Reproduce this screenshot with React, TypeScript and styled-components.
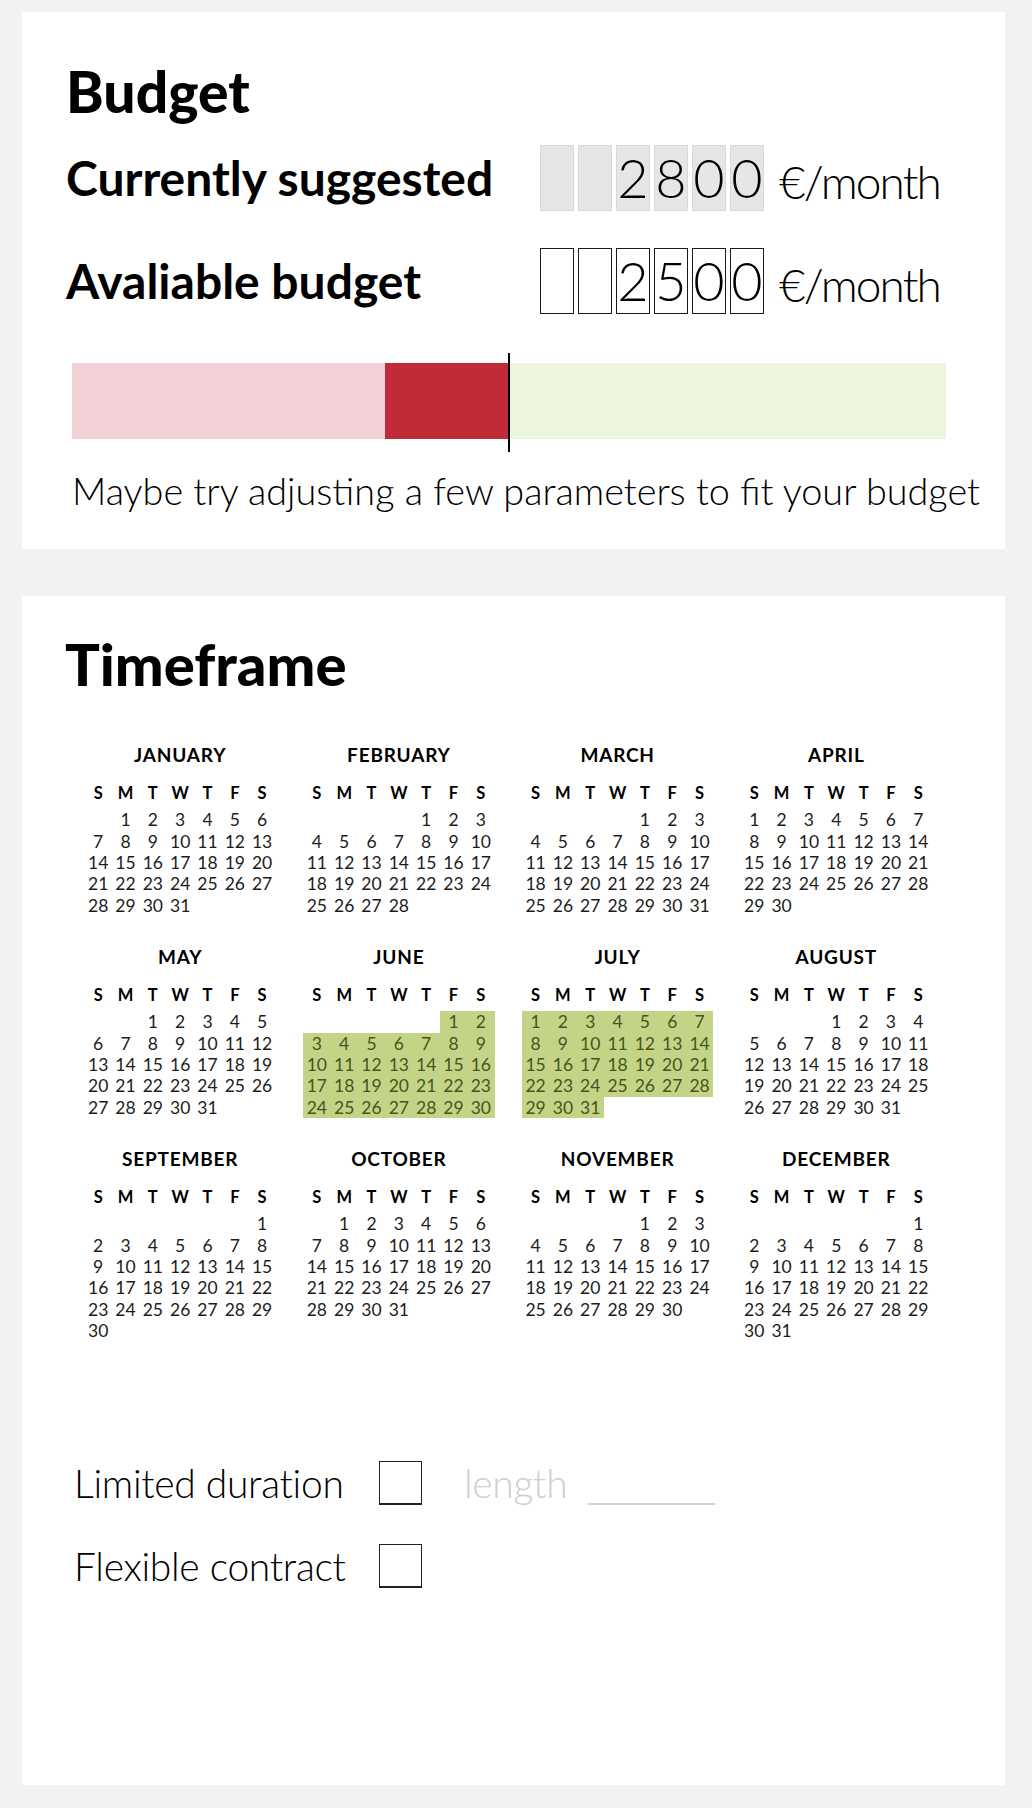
import React from "react";
import styled, { createGlobalStyle } from "styled-components";

const FONT = `"Lato", "Liberation Sans", sans-serif`;

const GlobalStyle = createGlobalStyle`
  html, body {
    margin: 0;
    padding: 0;
    background: #f2f2f2;
  }
  body {
    font-family: ${FONT};
    color: #000;
  }
`;

const Page = styled.div`
  width: 1032px;
  box-sizing: border-box;
  padding: 12px 27px 22px 22px;
  display: flex;
  flex-direction: column;
  gap: 47px;
`;

const Card = styled.section<{ $pad: string }>`
  background: #fff;
  padding: ${(p) => p.$pad};
`;

const Heading = styled.h1<{ $size: number; $lh: number }>`
  margin: 0;
  font-weight: 900;
  font-size: ${(p) => p.$size}px;
  line-height: ${(p) => p.$lh}px;
`;

/* ---------- budget ---------- */

const Amounts = styled.div`
  margin-top: 22px;
  display: flex;
  flex-direction: column;
  gap: 37px;
`;

const AmountRow = styled.div`
  display: grid;
  grid-template-columns: 474px max-content max-content;
  justify-content: start;
  align-items: center;
`;

const AmountLabel = styled.div`
  font-weight: 700;
  font-size: 48px;
  line-height: 66px;
  white-space: nowrap;
`;

const Digits = styled.div`
  display: flex;
  gap: 4px;
`;

const DigitBox = styled.div<{ $filled?: boolean }>`
  width: 34px;
  height: 66px;
  box-sizing: border-box;
  background: ${(p) => (p.$filled ? "#e6e6e6" : "#fff")};
  border: 1px solid ${(p) => (p.$filled ? "#d9d9d9" : "#1a1a1a")};
  font-weight: 300;
  font-size: 54px;
  line-height: 64px;
  text-align: center;
`;

const Unit = styled.div`
  margin-left: 15px;
  padding-top: 7px;
  height: 66px;
  box-sizing: border-box;
  font-weight: 300;
  font-size: 46px;
  line-height: 59px;
  letter-spacing: -1.9px;
  white-space: nowrap;
`;

const BarWrap = styled.div`
  position: relative;
  margin: 49px 0 0 6px;
  width: 874px;
  height: 76px;
  display: flex;
`;

const Segment = styled.div<{ $w: number; $c: string }>`
  width: ${(p) => p.$w}px;
  background: ${(p) => p.$c};
`;

const Marker = styled.div`
  position: absolute;
  left: 436px;
  top: -10px;
  width: 2px;
  height: 99px;
  background: #000;
`;

const Note = styled.p`
  margin: 30px 0 0 6px;
  font-weight: 300;
  font-size: 37.8px;
  line-height: 44px;
  white-space: nowrap;
`;

/* ---------- calendar ---------- */

const CELL = 27.34;
const ROW = 21.33;

const Year = styled.div`
  margin: 44px 0 0 19.5px;
  display: grid;
  grid-template-columns: repeat(4, ${CELL * 7}px);
  column-gap: ${CELL}px;
  row-gap: 6.7px;
`;

const MonthName = styled.div`
  height: 26px;
  line-height: 26px;
  text-align: center;
  font-weight: 700;
  font-size: 19px;
  letter-spacing: 0.8px;
`;

const Week = styled.div`
  display: grid;
  grid-template-columns: repeat(7, ${CELL}px);
`;

const WeekHead = styled(Week)`
  margin-top: 14px;
  height: 22px;
  line-height: 22px;
  font-weight: 700;
  font-size: 16.5px;
  text-align: center;
`;

const DayGrid = styled(Week)`
  margin-top: 5.3px;
  grid-template-rows: repeat(6, ${ROW}px);
`;

const Day = styled.div<{ $hl?: boolean }>`
  font-size: 17.5px;
  line-height: ${ROW}px;
  text-align: center;
  color: ${(p) => (p.$hl ? "#46551d" : "#1c1c1c")};
  background: ${(p) => (p.$hl ? "#c4d486" : "transparent")};
`;

/* ---------- options ---------- */

const Options = styled.div`
  margin: 120px 0 0 9px;
  display: flex;
  flex-direction: column;
  gap: 39px;
`;

const OptionRow = styled.label`
  display: flex;
  align-items: center;
  height: 44px;
`;

const OptionLabel = styled.span`
  width: 305px;
  font-weight: 300;
  font-size: 39px;
  line-height: 40px;
  letter-spacing: -0.3px;
  white-space: nowrap;
`;

const Check = styled.span`
  width: 43px;
  height: 44px;
  box-sizing: border-box;
  border: 1px solid #222;
  border-bottom-width: 2px;
`;

const Hint = styled.span`
  margin-left: 42px;
  font-weight: 300;
  font-size: 39px;
  line-height: 40px;
  letter-spacing: -0.3px;
  color: #cfcfcf;
`;

const Blank = styled.span`
  margin-left: 21px;
  align-self: flex-end;
  width: 127px;
  border-bottom: 2px solid #d0d0d0;
`;

const MONTHS = [
  "JANUARY",
  "FEBRUARY",
  "MARCH",
  "APRIL",
  "MAY",
  "JUNE",
  "JULY",
  "AUGUST",
  "SEPTEMBER",
  "OCTOBER",
  "NOVEMBER",
  "DECEMBER",
];
const WEEKDAYS = ["S", "M", "T", "W", "T", "F", "S"];
const SELECTED = [5, 6];

function Month({ index }: { index: number }) {
  const first = new Date(2018, index, 1).getDay();
  const count = new Date(2018, index + 1, 0).getDate();
  const cells: (number | null)[] = [];
  for (let i = 0; i < first; i++) cells.push(null);
  for (let d = 1; d <= count; d++) cells.push(d);
  const hl = SELECTED.includes(index);
  return (
    <div>
      <MonthName>{MONTHS[index]}</MonthName>
      <WeekHead>
        {WEEKDAYS.map((w, i) => (
          <span key={i}>{w}</span>
        ))}
      </WeekHead>
      <DayGrid>
        {cells.map((d, i) => (
          <Day key={i} $hl={hl && d !== null}>
            {d ?? ""}
          </Day>
        ))}
      </DayGrid>
    </div>
  );
}

function Amount({
  label,
  value,
  filled,
}: {
  label: string;
  value: string;
  filled?: boolean;
}) {
  const digits = value.padStart(6, " ").split("");
  return (
    <AmountRow>
      <AmountLabel>{label}</AmountLabel>
      <Digits>
        {digits.map((d, i) => (
          <DigitBox key={i} $filled={filled}>
            {d.trim()}
          </DigitBox>
        ))}
      </Digits>
      <Unit>€/month</Unit>
    </AmountRow>
  );
}

export default function App() {
  return (
    <>
      <GlobalStyle />
      <Page>
        <Card $pad="47px 0 36px 44px">
          <Heading $size={57} $lh={64}>
            Budget
          </Heading>
          <Amounts>
            <Amount label="Currently suggested" value="2800" filled />
            <Amount label="Avaliable budget" value="2500" />
          </Amounts>
          <BarWrap>
            <Segment $w={313} $c="#f1d1d5" />
            <Segment $w={124} $c="#c02b37" />
            <Segment $w={437} $c="#ebf4dc" />
            <Marker />
          </BarWrap>
          <Note>Maybe try adjusting a few parameters to fit your budget</Note>
        </Card>

        <Card $pad="34px 0 197px 43px">
          <Heading $size={58} $lh={68}>
            Timeframe
          </Heading>
          <Year>
            {MONTHS.map((_, i) => (
              <Month key={i} index={i} />
            ))}
          </Year>
          <Options>
            <OptionRow>
              <OptionLabel>Limited duration</OptionLabel>
              <Check />
              <Hint>length</Hint>
              <Blank />
            </OptionRow>
            <OptionRow>
              <OptionLabel>Flexible contract</OptionLabel>
              <Check />
            </OptionRow>
          </Options>
        </Card>
      </Page>
    </>
  );
}
